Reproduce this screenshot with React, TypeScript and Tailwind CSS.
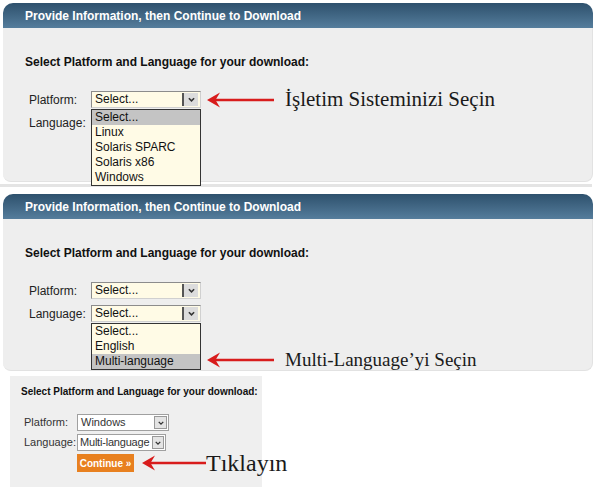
import React from "react";

const RED = "#d81c1c";

function Arrow({ w }: { w: number }) {
  return (
    <svg width={w} height={18} viewBox={`0 0 ${w} 18`} className="block shrink-0">
      <path d={`M6 9 L${w} 9`} stroke={RED} strokeWidth={2.4} />
      <path d="M0 9 L13 1.5 L8.5 9 L13 16.5 Z" fill={RED} />
    </svg>
  );
}

function Chevron({ size = 7 }: { size?: number }) {
  return (
    <svg width={size} height={size} viewBox="0 0 8 8" className="block">
      <path d="M1 2.5 L4 5.5 L7 2.5" stroke="#333" strokeWidth={1.8} fill="none" />
    </svg>
  );
}

function BigSelect({ value }: { value: string }) {
  return (
    <div className="flex h-[17px] w-[110px] shrink-0 items-center border border-[#8c8c8c] border-b-[#d0d0d0] border-r-[#d0d0d0] bg-[#fffbe6]">
      <span className="flex-1 whitespace-nowrap pl-[3px] text-[12px] leading-[15px] text-[#111]">{value}</span>
      <span className="mr-[2px] flex h-[13px] w-[16px] items-center justify-center border-l-2 border-[#555] bg-[#dcdcdc]">
        <Chevron />
      </span>
    </div>
  );
}

function DropList({ items, active }: { items: string[]; active: number }) {
  return (
    <div className="absolute left-0 top-full z-10 mt-[1px] w-[110px] border border-[#333] bg-[#fffbe6]">
      {items.map((it, i) => (
        <div
          key={it}
          className={
            "h-[15px] whitespace-nowrap pl-[3px] text-[12px] leading-[15px] text-[#111] " +
            (i === active ? "bg-[#c4c4c4]" : "")
          }
        >
          {it}
        </div>
      ))}
    </div>
  );
}

function Note({ text, size }: { text: string; size: string }) {
  return (
    <span
      className={"whitespace-nowrap leading-none text-[#1a1a1a] " + size}
      style={{ fontFamily: '"Liberation Serif", "DejaVu Serif", serif' }}
    >
      {text}
    </span>
  );
}

function Header() {
  return (
    <div className="flex h-[25px] items-center rounded-t-[10px] bg-gradient-to-b from-[#2e516d] to-[#557d9c] pl-[22px]">
      <span className="text-[12px] font-bold text-white">Provide Information, then Continue to Download</span>
    </div>
  );
}

export default function App() {
  return (
    <div
      className="relative h-[496px] w-[595px] overflow-hidden bg-white"
      style={{ fontFamily: '"Liberation Sans", Arial, sans-serif' }}
    >
      {/* Panel 1 */}
      <div className="ml-[3px] mt-[3px] w-[590px]">
        <Header />
        <div className="h-[154px] rounded-b-[8px] border-b border-r border-[#e2e2e2] bg-[#eeeeee] pl-[22px] pt-[27px]">
          <div className="text-[12px] font-bold leading-[14px] text-[#111]">
            Select Platform and Language for your download:
          </div>
          <div className="mt-[22px] flex flex-col gap-[6px] pl-[4px]">
            <div className="flex h-[17px] items-center">
              <span className="w-[62px] shrink-0 text-[12px] text-[#222]">Platform:</span>
              <div className="relative">
                <BigSelect value="Select..." />
                <DropList items={["Select...", "Linux", "Solaris SPARC", "Solaris x86", "Windows"]} active={0} />
              </div>
              <div className="ml-[6px] flex items-center gap-[11px]">
                <Arrow w={67} />
                <Note text="İşletim Sisteminizi Seçin" size="text-[21px]" />
              </div>
            </div>
            <div className="flex h-[17px] items-center">
              <span className="w-[62px] shrink-0 text-[12px] text-[#222]">Language:</span>
              {/* covered by the open platform list */}
              <div className="h-[17px] w-[110px] shrink-0" />
            </div>
          </div>
        </div>
      </div>

      <div className="mt-[2px] h-[3px] w-[592px] bg-[#e4e4e4]" />

      {/* Panel 2 */}
      <div className="ml-[3px] mt-[7px] w-[590px]">
        <Header />
        <div className="h-[152px] rounded-b-[8px] border-b border-r border-[#e2e2e2] bg-[#eeeeee] pl-[22px] pt-[27px]">
          <div className="text-[12px] font-bold leading-[14px] text-[#111]">
            Select Platform and Language for your download:
          </div>
          <div className="mt-[22px] flex flex-col gap-[6px] pl-[4px]">
            <div className="flex h-[17px] items-center">
              <span className="w-[62px] shrink-0 text-[12px] text-[#222]">Platform:</span>
              <BigSelect value="Select..." />
            </div>
            <div className="flex h-[17px] items-center">
              <span className="w-[62px] shrink-0 text-[12px] text-[#222]">Language:</span>
              <div className="relative">
                <BigSelect value="Select..." />
                <DropList items={["Select...", "English", "Multi-language"]} active={2} />
                <div className="absolute left-[116px] top-[45px] z-10 flex items-center gap-[11px]">
                  <Arrow w={67} />
                  <Note text="Multi-Language’yi Seçin" size="text-[19px]" />
                </div>
              </div>
            </div>
          </div>
        </div>
      </div>

      {/* Panel 3 */}
      <div className="ml-[10px] mt-[5px] h-[111px] w-[252px] bg-[#efefef] pl-[11px] pt-[10px]">
        <div className="whitespace-nowrap text-[10px] font-bold leading-[12px] text-[#111]">
          Select Platform and Language for your download:
        </div>
        <div className="mt-[16px] flex flex-col gap-[3px] pl-[3px]">
          <div className="flex h-[17px] items-center">
            <span className="w-[53px] shrink-0 text-[11px] text-[#333]">Platform:</span>
            <div className="flex h-[17px] w-[92px] shrink-0 items-center border border-[#a0a0a0] bg-white">
              <span className="flex-1 whitespace-nowrap pl-[3px] text-[11px] text-[#333]">Windows</span>
              <span className="mr-[1px] flex h-[13px] w-[13px] shrink-0 items-center justify-center border border-[#999] bg-[#e4e4e4]">
                <Chevron size={6} />
              </span>
            </div>
          </div>
          <div className="flex h-[17px] items-center">
            <span className="w-[53px] shrink-0 text-[11px] text-[#333]">Language:</span>
            <div className="flex h-[17px] w-[89px] shrink-0 items-center border border-[#a0a0a0] bg-white">
              <span className="flex-1 whitespace-nowrap pl-[2px] text-[11px] tracking-[-0.2px] text-[#333]">Multi-language</span>
              <span className="mr-[1px] flex h-[13px] w-[12px] shrink-0 items-center justify-center border border-[#999] bg-[#e4e4e4]">
                <Chevron size={6} />
              </span>
            </div>
          </div>
          <div className="flex h-[18px] items-center pl-[53px]">
            <div className="flex h-[18px] w-[57px] shrink-0 items-center justify-center whitespace-nowrap bg-[#e8801f] text-[10px] font-bold text-white">
              Continue »
            </div>
            <div className="ml-[8px] flex items-center gap-0">
              <Arrow w={64} />
              <Note text="Tıklayın" size="text-[24px]" />
            </div>
          </div>
        </div>
      </div>
    </div>
  );
}
